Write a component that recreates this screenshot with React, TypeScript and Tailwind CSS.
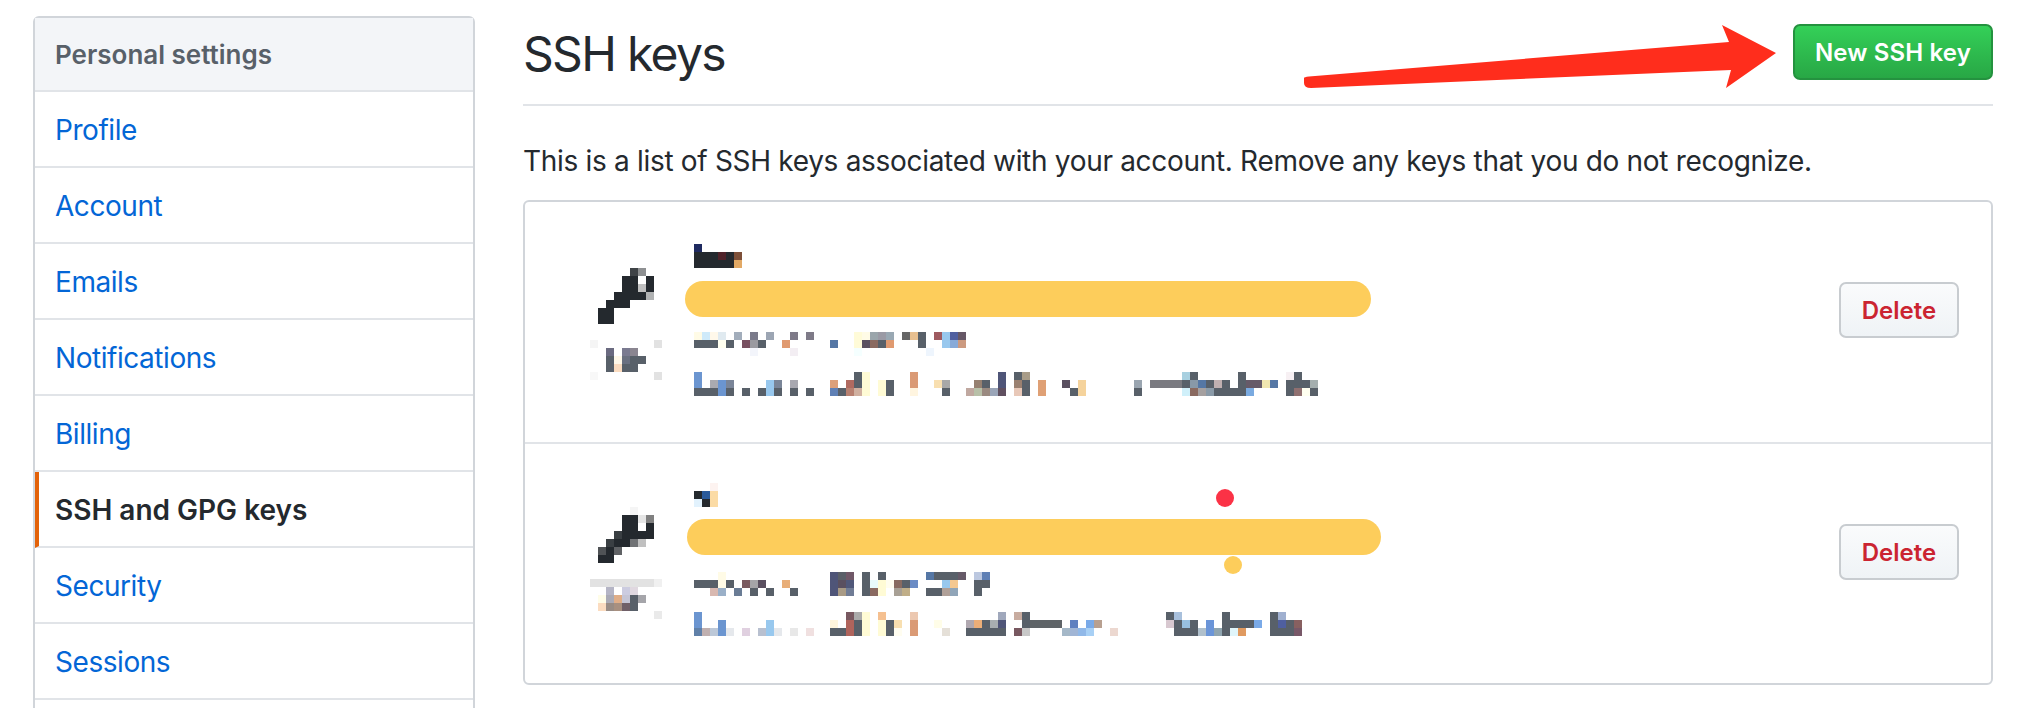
// Personal settings > SSH keys page, with the blurred out key details
type Cell = [number, string, number?];
type MosaicRows = Cell[][];

const D = "#24292e";
const G = "#586069";
const B = "#6b95d0";
const L = "#98c8ee";
const C = "#fffbd5";
const N = "#4f5578";
const O = "#da9a75";

function Mosaic({ rows, cols }: { rows: MosaicRows; cols: number }) {
  return (
    <svg width={cols * 8} height={rows.length * 8} className="block shrink-0">
      {rows.map((row, y) =>
        row.map(([x, fill, span], i) => (
          <rect key={y + "-" + i} x={x * 8} y={y * 8} width={(span ?? 1) * 8} height={8} fill={fill} />
        ))
      )}
    </svg>
  );
}

const key1: MosaicRows = [
  [[4, "#3f4347"], [5, "#8e9092"]],
  [[3, D, 2], [6, D]],
  [[3, D, 2], [5, "#c0c0c0"], [6, D]],
  [[2, D, 4], [6, "#b0b2b3"]],
  [[1, D, 3]],
  [[0, D, 2]],
  [[0, D, 2]],
];

const key2: MosaicRows = [
  [[4, "#f5f5f5"]],
  [[3, D, 2], [5, "#e5e5e5"], [6, "#808080"]],
  [[3, D, 2], [6, D]],
  [[2, "#3a3f43"], [3, D, 4]],
  [[1, "#3a3f43"], [2, D, 2], [4, "#707275"], [5, "#c0c0c0"]],
  [[0, "#505356"], [1, D], [2, "#606265"]],
  [[0, D, 2]],
];

const label1: MosaicRows = [
  [[0, "#f5f5f5"], [8, "#e2e2e2"]],
  [[2, "#6a6a80"], [4, "#7a7a90"], [5, "#8a8590"]],
  [[2, G], [3, "#fff8e8"], [4, "#6a7080"], [5, G, 2]],
  [[2, G], [3, "#fbdcc0"], [4, G, 2]],
  [[0, "#f8f8f8"], [8, "#e2e2e2"]],
];

const label2: MosaicRows = [
  [[0, "#e2e2e2", 8], [8, "#f0f0f0"]],
  [[2, "#b5b5c5"], [4, "#cccce0"], [5, "#e0d8e0"]],
  [[1, "#fffde8"], [2, "#aaaab5"], [3, "#e0ae88"], [4, "#c5c5d5"], [5, G], [6, "#a5a5aa"]],
  [[1, "#fbdcc0"], [2, "#988c85"], [3, "#a89080"], [4, "#706068"], [5, G]],
  [[8, "#eaeaea"]],
];

const title1: MosaicRows = [
  [[0, "#1f2a60"]],
  [[0, D, 3], [3, "#4e2229"], [4, D], [5, "#7d4f38"]],
  [[0, D, 5], [5, "#e2a965"]],
];

const title2: MosaicRows = [
  [[2, "#fdf3f0"]],
  [[0, D], [1, "#2a5a9a"], [2, "#fbdba5"]],
  [[0, "#e2f2fd"], [1, D], [2, "#fbdba5"]],
];

const meta1: MosaicRows = [
  [
    [0, "#fffbe6"], [1, "#cfeafa"], [2, "#fff8ea"], [3, "#e0eaf0"], [5, "#a2adbb"], [7, "#7a7a8a"], [9, "#9ca5b3"],
    [12, "#7e7a88"], [14, "#7e7a88"], [20, "#fffbd8"], [21, "#fffbe6"], [22, "#9aa5ab"], [23, "#9a9aa5"],
    [24, "#99a8b3"], [26, "#666666"], [27, "#e8c090"], [28, G], [30, "#9e5a60"], [31, L], [32, "#5060a0"], [33, "#665866"],
  ],
  [
    [0, G, 3], [3, "#fffff0"], [4, G], [6, "#785060"], [7, "#9a9aa0"], [8, G], [11, "#e09a70"], [17, "#5577a5"],
    [20, "#fffbd8"], [21, "#5a5060"], [22, "#8a6a60"], [23, G], [24, "#e09a70"], [28, G], [31, L], [32, "#88aad8"], [33, "#cc9a80"],
  ],
  [[7, "#f3f5fb"], [12, "#f3eef3"], [20, "#f5ffff"], [29, "#eef5fd"]],
];

const meta2: MosaicRows = [
  [
    [3, "#fffbe6"], [17, N], [18, "#5a5f68"], [19, "#705868"], [21, G], [23, G], [29, "#5577a5"], [30, G, 3],
    [33, "#665a68"], [35, "#bcc8e0"], [36, "#5f80b5"],
  ],
  [
    [0, G, 3], [3, "#fffbe6"], [4, G], [6, "#7a5a60"], [7, "#a5a5a8"], [8, "#5a5060"], [11, "#e8ae78"], [17, N],
    [18, "#5a5060"], [19, "#50587a"], [21, G], [22, "#e8fafa"], [23, C], [24, "#fffdf0"], [25, "#886a60"], [26, G],
    [27, "#6b8cc5"], [31, L], [32, "#f5c890"], [35, G, 2],
  ],
  [
    [2, "#d8b8b0"], [3, "#9ab0c8"], [5, "#6a7c95"], [7, G], [9, G], [12, G], [17, N], [18, "#a89a85"], [19, "#707c95"],
    [21, G], [22, "#8a6a60"], [23, C], [25, "#a8a095"], [26, "#c0ae88"], [29, G, 2], [31, "#b0a098"], [32, "#90a5b8"], [35, G],
  ],
];

const print1: MosaicRows = [
  [
    [0, B], [20, G], [21, C], [27, O], [38, N], [40, G], [41, "#a89c88"], [61, "#a8d0e0"], [62, G], [68, G], [74, "#f7f0f3"], [75, G],
  ],
  [
    [0, B], [2, "#aaaab0"], [3, B], [4, "#7a8598"], [9, L], [10, "#7a8598"], [12, "#a8a8b0"], [17, "#dda07a"],
    [19, "#b06a60"], [20, G], [21, C], [23, C], [24, G], [27, O], [30, "#f8dfb0"], [31, "#a8a8a8"], [35, "#968070"],
    [36, G], [38, N], [40, "#9a8070"], [41, G], [43, "#dfa075"], [46, "#5a5060"], [48, "#f5d39c"], [55, "#9aa5b0"],
    [57, "#7a7a80", 4], [61, G], [62, "#8899a8"], [63, "#5577a5"], [64, G], [65, "#c0afb0"], [66, G], [68, G],
    [69, "#665a68", 2], [71, "#f0e6b0"], [72, "#5577a5"], [74, G, 3], [77, "#a5afaf"],
  ],
  [
    [0, G, 3], [3, B], [4, G], [6, G], [8, G], [9, L], [10, G], [12, G], [14, G], [17, "#5f80b5"], [18, G],
    [19, "#b88070"], [20, "#d0b0a0"], [21, C], [23, C], [24, G], [27, "#fff5e0"], [31, G], [34, "#c0a8a0"],
    [35, "#b8c0a8"], [36, "#9a8a80"], [37, "#9aa5b8"], [38, "#605060"], [40, "#e8c8b8"], [41, G], [43, "#dfa075"],
    [47, G], [48, "#f5d39c"], [55, G], [61, "#d0f0fa"], [62, "#8a6a60"], [63, "#a5a0a0"], [64, "#8a9aa8"], [65, G, 4],
    [69, "#7aaae0"], [74, G], [75, "#907070"], [76, "#fffff0"], [77, G],
  ],
];

const print2: MosaicRows = [
  [
    [0, B], [19, "#785860"], [20, "#aaaaaa"], [21, C], [23, "#f5c090"], [27, "#ecc8b0"], [38, "#a0a8bc"], [40, "#c8aca0"],
    [41, G], [59, G], [60, "#a8c0dc"], [66, G], [72, G], [73, "#a0b0d0"],
  ],
  [
    [0, B], [3, B], [9, L], [17, "#fff5dc"], [19, "#b0645c"], [20, G], [21, C], [23, C], [24, G], [25, "#f8dfb0"],
    [27, O], [30, "#fffde8"], [34, "#b0a8b0"], [35, "#ecae78"], [36, G], [37, "#a8aeb0"], [38, N], [41, G],
    [42, "#5f6468", 4], [47, "#5f80c0"], [49, "#7aaae8"], [50, "#b8a090"], [59, "#d8c8d0"], [60, G], [61, "#98c0e0"],
    [62, G], [64, "#6b95d8"], [66, G, 4], [70, "#7aaae8"], [72, G], [73, "#4f5fa0"], [74, G], [75, "#886060"],
  ],
  [
    [0, "#6080a8"], [1, "#c0b0b0"], [2, "#bcc8d8"], [3, B], [4, "#e5e8ec"], [6, "#e0d0e0"], [8, "#b8c0d0"], [9, L],
    [10, "#e5e8ec"], [12, "#e8e8e8"], [14, "#f0e0e0"], [17, G, 2], [19, "#b0645c"], [20, G], [21, C], [23, C], [24, G],
    [25, "#fffdf0"], [27, O], [31, "#e5e0d8"], [34, G, 5], [40, "#785860"], [41, "#c8c8c8"], [46, "#a5b8c8"],
    [47, "#a0b5d5"], [48, "#90b8e8"], [49, "#a8d0f5"], [52, "#ecd8d0"], [60, G, 3], [63, "#b0c0cc"], [64, "#6b95d8"],
    [65, "#90a5b0"], [66, G], [67, "#e0f5fa"], [68, "#e09a60"], [72, G, 3], [75, "#785868"],
  ],
];

const navItems = ["Profile", "Account", "Emails", "Notifications", "Billing", "SSH and GPG keys", "Security", "Sessions"];

function Sidebar() {
  return (
    <nav className="w-[442px] shrink-0 self-start rounded-[6px] border-2 border-[#d1d5da]">
      <div className="flex h-[74px] items-center border-b-2 border-[#e1e4e8] bg-[#f3f5f8] pl-[20px] text-[26px] font-semibold text-[#586069]">
        Personal settings
      </div>
      {navItems.map((item) => {
        const active = item === "SSH and GPG keys";
        return (
          <a
            key={item}
            className={
              active
                ? "flex h-[76px] items-center border-b-2 border-l-4 border-b-[#e1e4e8] border-l-[#e36209] pl-[16px] pt-[2px] text-[28px] font-semibold text-[#24292e]"
                : "flex h-[76px] items-center border-b-2 border-[#e1e4e8] pl-[20px] pt-[2px] text-[28px] tracking-[-0.45px] text-[#0366d6]"
            }
          >
            {item}
          </a>
        );
      })}
      {/* next row is cut off by the bottom of the window */}
      <div className="h-[76px]" />
    </nav>
  );
}

function DeleteButton({ className }: { className: string }) {
  return (
    <button
      className={
        "ml-auto h-[56px] w-[120px] shrink-0 self-start rounded-[7px] border-2 border-[#c8ccd0] bg-gradient-to-b from-[#fafbfc] to-[#eff3f6] pt-[2px] text-[24px] font-semibold text-[#cb2431] " +
        className
      }
    >
      Delete
    </button>
  );
}

export default function App() {
  return (
    <div className="flex h-[708px] items-start overflow-hidden bg-white pl-[33px] font-['Inter','Liberation_Sans',sans-serif] text-[#24292e]">
      <div className="shrink-0 pt-[16px]">
        <Sidebar />
      </div>

      <main className="relative ml-[48px] w-[1470px] shrink-0">
        <header className="flex h-[106px] items-start justify-between border-b-2 border-[#e1e4e8]">
          <h1 className="mt-[22px] text-[48px] leading-[64px] font-normal tracking-[-1.7px]">SSH keys</h1>
          <button className="mt-[24px] h-[56px] w-[200px] rounded-[7px] border-2 border-[#24923f] bg-gradient-to-b from-[#34d058] to-[#28a745] pt-[2px] text-[24px] font-semibold tracking-[0.15px] text-white">
            New SSH key
          </button>
        </header>

        {/* red arrow drawn over the header */}
        <svg width="490" height="80" viewBox="0 0 490 80" className="absolute left-[780px] top-[16px]">
          <path
            d="M1 62 Q1 61 6 60.5 L426 26 L419 9 L473 37 L423 72 L428 54 L8 72 Q1 72 1 67 Z"
            fill="#ff2d1c"
          />
        </svg>

        <p className="mt-[39px] text-[28px] leading-[32px] tracking-[-0.31px]">
          This is a list of SSH keys associated with your account. Remove any keys that you do not recognize.
        </p>

        <section className="mt-[23px] w-[1470px] rounded-[6px] border-2 border-[#d1d5da]">
          <div className="flex h-[242px] border-b-2 border-[#e1e4e8]">
            <div className="ml-[65px] flex w-[104px] shrink-0 flex-col gap-[16px] pt-[66px]">
              <div className="pl-[8px]">
                <Mosaic rows={key1} cols={7} />
              </div>
              <Mosaic rows={label1} cols={9} />
            </div>
            <div className="pt-[42px]">
              <Mosaic rows={title1} cols={6} />
              <div className="ml-[-9px] mt-[13px] h-[36px] w-[686px] rounded-full bg-[#fdcd5b]" />
              <div className="mt-[15px]">
                <Mosaic rows={meta1} cols={34} />
              </div>
              <div className="mt-[16px]">
                <Mosaic rows={print1} cols={78} />
              </div>
            </div>
            <DeleteButton className="mr-[32px] mt-[80px]" />
          </div>

          <div className="relative flex h-[239px]">
            <div className="ml-[65px] flex w-[104px] shrink-0 flex-col gap-[16px] pt-[63px]">
              <div className="pl-[8px]">
                <Mosaic rows={key2} cols={7} />
              </div>
              <Mosaic rows={label2} cols={9} />
            </div>
            <div className="pt-[39px]">
              <Mosaic rows={title2} cols={3} />
              <div className="ml-[-7px] mt-[12px] h-[36px] w-[694px] rounded-full bg-[#fdcd5b]" />
              <div className="mt-[17px]">
                <Mosaic rows={meta2} cols={37} />
              </div>
              <div className="mt-[16px]">
                <Mosaic rows={print2} cols={76} />
              </div>
            </div>
            <DeleteButton className="mr-[32px] mt-[80px]" />
            <span className="absolute left-[691px] top-[45px] size-[18px] rounded-full bg-[#fb3246]" />
            <span className="absolute left-[699px] top-[112px] size-[18px] rounded-full bg-[#fdcd5b]" />
          </div>
        </section>
      </main>
    </div>
  );
}
